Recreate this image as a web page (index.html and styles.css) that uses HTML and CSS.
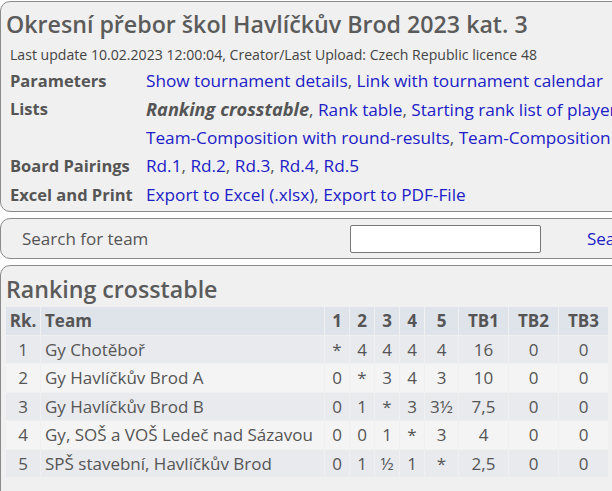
FILE: index.html
```html
<!DOCTYPE html>
<html lang="cs">
<head>
<meta charset="utf-8">
<title>Okresní přebor škol Havlíčkův Brod 2023 kat. 3</title>
<link rel="stylesheet" href="styles.css">
</head>
<body>
<div class="page">
  <section class="box head">
    <h1 class="title">Okresní přebor škol Havlíčkův Brod 2023 kat. 3</h1>
    <div class="info">Last update 10.02.2023 12:00:04, Creator/Last Upload: Czech Republic licence 48</div>
    <div class="nav">
      <div class="lbl">Parameters</div>
      <div class="links"><a href="#">Show tournament details</a>, <a href="#">Link with tournament calendar</a></div>
      <div class="lbl">Lists</div>
      <div class="links"><span class="cur">Ranking crosstable</span>, <a href="#">Rank table</a>, <a href="#">Starting rank list of players</a>, <a href="#">Alphabetical list all groups</a></div>
      <div class="lbl"></div>
      <div class="links"><a href="#">Team-Composition with round-results</a>, <a href="#">Team-Composition without round-results</a></div>
      <div class="lbl">Board Pairings</div>
      <div class="links"><a href="#">Rd.1</a>, <a href="#">Rd.2</a>, <a href="#">Rd.3</a>, <a href="#">Rd.4</a>, <a href="#">Rd.5</a></div>
      <div class="lbl">Excel and Print</div>
      <div class="links"><a href="#">Export to Excel (.xlsx)</a>, <a href="#">Export to PDF-File</a></div>
    </div>
  </section>
  <section class="box search">
    <span class="slabel">Search for team</span>
    <input class="sinput" type="text">
    <a class="sbtn" href="#">Search</a>
  </section>
  <section class="box results">
    <h2 class="title2">Ranking crosstable</h2>
    <table class="ct">
      <thead>
        <tr><th class="rk">Rk.</th><th class="team">Team</th><th class="r">1</th><th class="r">2</th><th class="r">3</th><th class="r">4</th><th class="r5">5</th><th class="tb">TB1</th><th class="tb">TB2</th><th class="tb">TB3</th></tr>
      </thead>
      <tbody>
        <tr><td class="rk">1</td><td class="team">Gy Chotěboř</td><td>*</td><td>4</td><td>4</td><td>4</td><td>4</td><td>16</td><td>0</td><td>0</td></tr>
        <tr><td class="rk">2</td><td class="team">Gy Havlíčkův Brod A</td><td>0</td><td>*</td><td>3</td><td>4</td><td>3</td><td>10</td><td>0</td><td>0</td></tr>
        <tr><td class="rk">3</td><td class="team">Gy Havlíčkův Brod B</td><td>0</td><td>1</td><td>*</td><td>3</td><td>3½</td><td>7,5</td><td>0</td><td>0</td></tr>
        <tr><td class="rk">4</td><td class="team">Gy, SOŠ a VOŠ Ledeč nad Sázavou</td><td>0</td><td>0</td><td>1</td><td>*</td><td>3</td><td>4</td><td>0</td><td>0</td></tr>
        <tr><td class="rk">5</td><td class="team">SPŠ stavební, Havlíčkův Brod</td><td>0</td><td>1</td><td>½</td><td>1</td><td>*</td><td>2,5</td><td>0</td><td>0</td></tr>
      </tbody>
    </table>
  </section>
</div>
</body>
</html>
```

FILE: styles.css
```css
html, body {
  margin: 0;
  padding: 0;
  background: #ffffff;
  overflow: hidden;
}
body {
  font-family: "Open Sans", "Noto Sans", sans-serif;
  color: #555;
}
.page {
  width: 960px;
  padding-top: 1px;
  display: flex;
  flex-direction: column;
  gap: 6px;
}
.box {
  background: #f0f0f0;
  border: 1px solid #8a8a8a;
  border-radius: 10px;
}
.head {
  height: 209px;
  padding: 0 0 0 5px;
}
.title {
  margin: 7px 0 0 0;
  font-size: 23.2px;
  font-weight: 600;
  line-height: 31px;
  color: #5b5b5b;
}
.info {
  font-size: 14.1px;
  line-height: 18px;
  color: #444;
  margin: 6px 0 0 4px;
  white-space: nowrap;
}
.nav {
  display: grid;
  grid-template-columns: 136px auto;
  grid-auto-rows: 28.5px;
  align-items: center;
  margin: 2px 0 0 4px;
  font-size: 17.2px;
  white-space: nowrap;
}
.lbl {
  font-weight: 700;
  font-size: 16.5px;
  color: #555;
}
.links {
  color: #555;
}
.links a, .sbtn {
  color: #2020c6;
  text-decoration: none;
}
.cur {
  font-weight: 700;
  font-style: italic;
  font-size: 18.2px;
  color: #555;
}
.search {
  height: 39px;
  display: flex;
  align-items: center;
  font-size: 17px;
}
.slabel {
  margin-left: 21px;
  width: 328px;
  color: #555;
}
.sinput {
  width: 191px;
  height: 28px;
  box-sizing: border-box;
  margin: 0;
  padding: 0;
  border: 1px solid #777;
  border-radius: 2px;
  background: #fff;
}
.sbtn {
  margin-left: 46px;
}
.results {
  height: 260px;
  padding: 0 0 0 4px;
}
.title2 {
  margin: 7px 0 0 1px;
  font-size: 23.2px;
  font-weight: 600;
  line-height: 33px;
  color: #5b5b5b;
}
.ct {
  border-collapse: separate;
  border-spacing: 1px;
  table-layout: fixed;
  font-size: 17px;
  color: #555;
}
.ct th, .ct td {
  box-sizing: border-box;
  height: 27.5px;
  padding: 0;
  text-align: center;
  white-space: nowrap;
}
.ct th {
  background: #dfe3ea;
  font-weight: 700;
}
.ct tbody tr:nth-child(odd) td { background: #e8eaee; }
.ct tbody tr:nth-child(even) td { background: #f4f4f4; }
.ct .team { text-align: left; width: 283px; padding-left: 4px; }
.ct .rk { width: 34px; }
.ct .r { width: 24px; }
.ct .r5 { width: 33px; }
.ct .tb { width: 49px; }
```
